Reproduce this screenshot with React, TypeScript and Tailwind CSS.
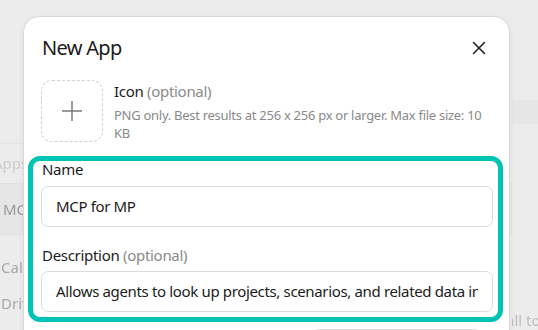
import React from "react";

export default function App() {
  const font = { fontFamily: '"Noto Sans", "Open Sans", sans-serif' };
  return (
    <div className="relative h-[330px] w-[538px] overflow-hidden bg-[#ececec]" style={font}>
      {/* Background page (blurred) */}
      <div className="flex h-full blur-[0.6px]">
        <div className="flex flex-1 flex-col pt-[143px]">
          <div className="flex h-[40px] items-center border-t border-[#e2e2e2] pl-[2px] text-[15px] text-[#cbcbcb]">
            <span className="-ml-[9px]">Apps</span>
          </div>
          <div className="flex h-[52px] items-center border-y border-[#e0e0e0] bg-[#e6e6e6] pl-[3px] text-[15px] text-[#9a9a9a]">MCP</div>
          <div className="mt-[14px] flex h-[36px] items-center pl-[1px] text-[15px] text-[#a8a8a8]">Calendar</div>
          <div className="flex h-[36px] items-center pl-[1px] text-[15px] text-[#a8a8a8]">Drive</div>
        </div>
        <div className="flex w-[26px] shrink-0 flex-col overflow-hidden">
          <div className="mt-[100px] h-[25px] bg-[#e6e6e6]" />
          <div className="-ml-[6px] mt-[186px] whitespace-nowrap text-[15px] leading-[20px] text-[#bdbdbd]">all to</div>
        </div>
      </div>

      {/* Modal */}
      <div className="absolute left-[23px] top-[16px] h-[400px] w-[487px] rounded-[16px] border border-[#d8d8d8] bg-white pl-[17px] pr-[16px] pt-[17px] shadow-[0_2px_6px_rgba(0,0,0,0.06)]">
        <div className="flex h-[28px] items-center justify-between pl-[1px]">
          <div className="text-[20px] leading-[28px] tracking-[-0.7px] text-[#1b1b1b]">New App</div>
          <svg width="14" height="14" viewBox="0 0 14 14" className="mr-[7px]">
            <path d="M1.5 1.5L12.5 12.5M12.5 1.5L1.5 12.5" stroke="#1b1b1b" strokeWidth="1.5" strokeLinecap="round" />
          </svg>
        </div>

        <div className="mt-[18px] flex items-start gap-[11px]">
          <div className="flex h-[62px] w-[62px] shrink-0 items-center justify-center rounded-[11px] border border-dashed border-[#d2d2d2]">
            <svg width="22" height="22" viewBox="0 0 22 22">
              <path d="M11 1V21M1 11H21" stroke="#7c7c7c" strokeWidth="1.5" />
            </svg>
          </div>
          <div className="flex flex-col pt-[1px]">
            <div className="text-[15px] leading-[20px] tracking-[-0.3px] text-[#1b1b1b]">
              Icon <span className="text-[#8a8a8a]">(optional)</span>
            </div>
            <div className="mt-[5px] w-[372px] text-[13px] leading-[18px] tracking-[-0.28px] text-[#8a8a8a]">
              PNG only. Best results at 256 x 256 px or larger. Max file size: 10 KB
            </div>
          </div>
        </div>

        <div className="-ml-[13px] -mr-[10px] mt-[14px] rounded-[12px] border-[5px] border-[#00c4b3] pb-[5px] pl-[8px] pr-[5px]">
          <div className="-mt-[2px] pl-[1px] text-[15px] leading-[20px] tracking-[-0.3px] text-[#1b1b1b]">Name</div>
          <div className="mt-[7px] flex h-[41px] items-center overflow-hidden whitespace-nowrap rounded-[7px] border border-[#dcdcdc] px-[14px] text-[15px] tracking-[-0.35px] text-[#1b1b1b]">
            MCP for MP
          </div>
          <div className="mt-[18px] pl-[1px] text-[15px] leading-[20px] tracking-[-0.3px] text-[#1b1b1b]">
            Description <span className="text-[#8a8a8a]">(optional)</span>
          </div>
          <div className="mt-[6px] flex h-[41px] items-center overflow-hidden whitespace-nowrap rounded-[7px] border border-[#dcdcdc] pl-[14px] pr-[14px] text-[15px] tracking-[-0.35px] text-[#1b1b1b]">
            <span className="block overflow-hidden">Allows agents to look up projects, scenarios, and related data in MP</span>
          </div>
        </div>

        <div className="mt-[7px] flex justify-end pr-[12px]">
          <div className="h-[36px] w-[169px] rounded-[7px] border border-[#dcdcdc]" />
        </div>
      </div>
    </div>
  );
}
